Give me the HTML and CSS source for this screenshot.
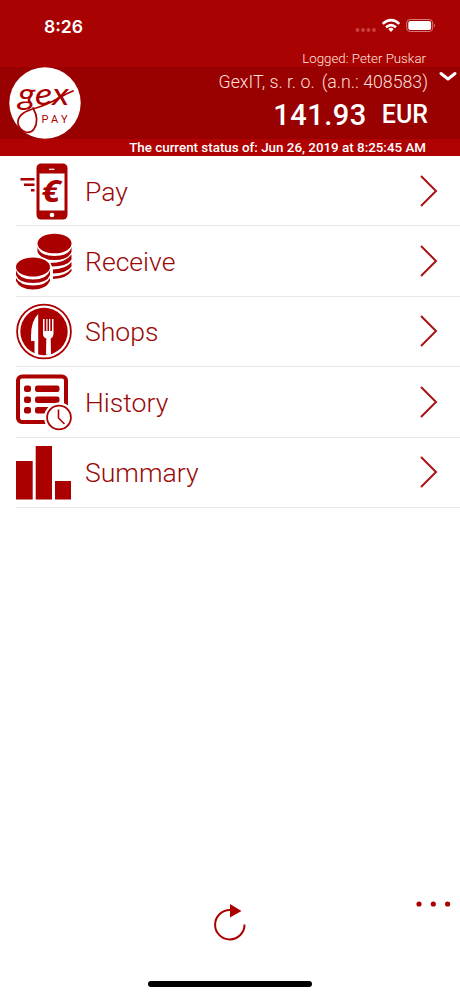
FILE: index.html
```html
<!DOCTYPE html>
<html lang="en">
<head>
<meta charset="utf-8">
<meta name="viewport" content="width=device-width">
<title>gex PAY</title>
<link rel="stylesheet" href="styles.css">
</head>
<body>
<div class="app">
<header class="header">
  <div class="statusbar">
    <span class="time">8:26</span>
    <svg class="signals" width="82" height="18" viewBox="0 0 82 18">
      <g fill="#c94040"><circle cx="3.500" cy="13" r="1.900"/><circle cx="9" cy="13" r="1.900"/><circle cx="14.500" cy="13" r="1.900"/><circle cx="20" cy="13" r="1.900"/></g>
      <g fill="none" stroke="#fff" stroke-width="2.500"><path d="M28.700 6.900Q37 -.700 45.300 6.900"/><path d="M32 10.300Q37 5.900 42 10.300"/></g>
      <path d="M34.300 12Q37 9.700 39.700 12L37 14.900Z" fill="#fff"/>
      <rect x="52.700" y="2.500" width="26" height="12" rx="3.500" fill="none" stroke="#d77a7a"/>
      <rect x="54.300" y="4" width="22.800" height="9" rx="2" fill="#fff"/>
      <path d="M80 6.500Q82 8.500 80 10.500Z" fill="#d77a7a"/>
    </svg>
  </div>
  <div class="logged"><span>Logged: Peter Puskar</span></div>
  <div class="account">
    <svg class="logo" width="72" height="72" viewBox="0 0 72 72">
      <circle cx="36" cy="36" r="35.700" fill="#fff"/>
      <text class="script" x="9" y="38" textLength="51" lengthAdjust="spacingAndGlyphs">gex</text>
      <path class="flourish" d="M24 41C28 48 29 56 25 62C20 69 11 64 9 57C8 48 16 44 27 41C43 37 51 29 64 24"/>
      <text class="pay" x="32.500" y="55.500" textLength="26">PAY</text>
    </svg>
    <div class="details">
      <div class="company"><span>GexIT, s. r. o.</span><span>(a.n.: 408583)</span></div>
      <div class="balance"><span class="amount">141.93</span><span class="currency">EUR</span></div>
    </div>
    <svg class="expand" width="18" height="14" viewBox="0 0 18 14"><path d="M2 3.500L9 9L16 3.500" fill="none" stroke="#fff" stroke-width="3" stroke-linejoin="round" stroke-linecap="round"/></svg>
  </div>
  <div class="updated"><span>The current status of: Jun 26, 2019 at 8:25:45 AM</span></div>
</header>
<main class="menu">
  <div class="row">
    <svg class="icon" width="56" height="58" viewBox="0 0 56 58">
      <rect x="20.500" y="1.500" width="31" height="56" rx="4.500"/>
      <path class="paper" d="M23.500 11.500H48.500V48.500H23.500Z"/>
      <path d="M33 7.300H38.500" stroke="#fff" stroke-width="1.200"/><circle class="paper" cx="36" cy="53" r="2.300"/>
      <path d="M4.500 17.300H18.500M8 22.800H18.500M15 28.300H18.500" stroke="#a00" stroke-width="2.500"/>
      <text class="euro" x="25.500" y="40" textLength="19" lengthAdjust="spacingAndGlyphs">€</text>
    </svg>
    <span class="label">Pay</span>
    <svg class="chevron" width="20" height="34" viewBox="0 0 20 34"><path d="M2 2L17 17L2 32"/></svg>
  </div>
  <div class="row">
    <svg class="icon" width="56" height="58" viewBox="0 0 56 58">
      <ellipse cx="38.500" cy="11.500" rx="17" ry="9.800"/>
      <path d="M21.500 15Q24 24 38.500 24Q53 24 55.500 15V20Q52 28 38.500 28Q25 28 21.500 20Z"/>
      <path d="M32 31Q49 31.500 55.500 22.500V27.500Q51 34.500 36 34.500Q35 32.500 32 31ZM37 37.500Q50 37 55.500 30V34.500Q51 41 37 41.500ZM37 44.500Q50 44 55.500 36.500V39Q51 46.500 37 47Z"/>
      <ellipse cx="17" cy="35" rx="18.500" ry="11.500" class="paper"/>
      <ellipse cx="17" cy="35" rx="17" ry="9.600"/>
      <path d="M0 38.500Q3 47.500 17 47.500Q31 47.500 34 38.500V43Q31 51 17 51Q3 51 0 43ZM0 46Q4 53.500 17 53.500Q30 53.500 34 46V49Q30 57.500 17 57.500Q4 57.500 0 49Z"/>
    </svg>
    <span class="label">Receive</span>
    <svg class="chevron" width="20" height="34" viewBox="0 0 20 34"><path d="M2 2L17 17L2 32"/></svg>
  </div>
  <div class="row">
    <svg class="icon" width="56" height="58" viewBox="0 0 56 58">
      <circle cx="28" cy="29.500" r="26.900" fill="none" stroke="#a00" stroke-width="1.800"/>
      <circle cx="28" cy="29.500" r="23.700"/>
      <path class="paper" d="M22.200 12Q15 19 15 34V39H18.500V52L22.200 53.200ZM27 17H28.500V29H30.300V17H31.500V29H33V17H34.300V29H36V17H37.500V32Q37.500 35 34.700 36.500L35 52Q32.500 53.700 30 52.500L30.300 36.500Q27 35 27 32Z"/>
    </svg>
    <span class="label">Shops</span>
    <svg class="chevron" width="20" height="34" viewBox="0 0 20 34"><path d="M2 2L17 17L2 32"/></svg>
  </div>
  <div class="row">
    <svg class="icon" width="56" height="58" viewBox="0 0 56 58">
      <rect x="2" y="3.500" width="48" height="45.500" rx="4" fill="none" stroke="#a00" stroke-width="4"/>
      <rect x="8" y="12.500" width="7" height="6.500" rx="2.300"/><rect x="19" y="12.500" width="24.500" height="6.500" rx="2.300"/>
      <rect x="8" y="23.500" width="7" height="6.500" rx="2.300"/><rect x="19" y="23.500" width="24.500" height="6.500" rx="2.300"/>
      <rect x="8" y="34" width="7" height="6.500" rx="2.300"/><rect x="19" y="34" width="18" height="6.500" rx="2.300"/>
      <circle cx="43" cy="44.500" r="15" class="paper"/>
      <circle cx="43" cy="44.500" r="11.900" fill="none" stroke="#a00" stroke-width="1.800"/>
      <path d="M42.500 36.500V45L48.500 51" fill="none" stroke="#a00" stroke-width="1.600"/>
    </svg>
    <span class="label">History</span>
    <svg class="chevron" width="20" height="34" viewBox="0 0 20 34"><path d="M2 2L17 17L2 32"/></svg>
  </div>
  <div class="row">
    <svg class="icon" width="56" height="58" viewBox="0 0 56 58"><path d="M0 18H16.700V56.500H0ZM19.700 3H36V56.500H19.700ZM39 38H55V56.500H39Z"/></svg>
    <span class="label">Summary</span>
    <svg class="chevron" width="20" height="34" viewBox="0 0 20 34"><path d="M2 2L17 17L2 32"/></svg>
  </div>
</main>
<footer class="footer">
  <div class="toolbar">
    <svg class="refresh" width="34" height="40" viewBox="0 0 34 40"><path d="M17 7A14.700 14.700 0 1 0 31.500 21.500" fill="none" stroke="#a00" stroke-width="2"/><path d="M17 1L28.500 8L17 14.500Z" fill="#a00"/></svg>
    <svg class="more" width="36" height="8" viewBox="0 0 36 8"><g fill="#a00"><circle cx="4" cy="4" r="2.600"/><circle cx="18.300" cy="4" r="2.600"/><circle cx="32.600" cy="4" r="2.600"/></g></svg>
  </div>
  <div class="home"></div>
</footer>
</div>
</body>
</html>
```
FILE: styles.css
```css
* { box-sizing: border-box; }
body { margin: 0; background: #fff; font-family: Roboto, sans-serif; }
.app { width: 460px; height: 996px; display: flex; flex-direction: column; overflow: hidden; }
.header { height: 156px; background: #a90202; color: #fff; }
.statusbar { height: 50px; padding: 2px 24px 0 44px; display: flex; align-items: center; justify-content: space-between; }
.time { font: 600 17.6px Inter, sans-serif; }
.logged { height: 17px; padding-right: 34px; display: flex; align-items: center; justify-content: flex-end; font-size: 13.3px; font-weight: 300; color: #ffe5df; }
.account { height: 72px; padding-left: 9px; background: #990101; display: flex; }
.logo { flex: none; }
.script { font: italic 31px Lato, sans-serif; fill: #a00; }
.flourish { fill: none; stroke: #a00; stroke-width: 1.7; stroke-linecap: round; }
.pay { font: 400 11px Roboto, sans-serif; fill: #a00; }
.details { flex: 1; }
.company { height: 29px; display: flex; align-items: center; justify-content: flex-end; gap: 7px; font-size: 17.75px; font-weight: 300; color: #ffdfd8; }
.balance { height: 38px; display: flex; align-items: center; justify-content: flex-end; gap: 15px; font-weight: 500; line-height: 38px; }
.amount { font-size: 29px; letter-spacing: .5px; }
.currency { font-size: 25px; }
.expand { margin: 3px 3px 0 11px; flex: none; }
.updated { height: 17px; padding-right: 34px; background: #b00202; display: flex; align-items: center; justify-content: flex-end; font-size: 13.38px; font-weight: 500; }
.row { height: 70.4px; margin-left: 16px; padding-right: 21px; border-bottom: 1px solid #e7e7e7; display: flex; align-items: center; }
.icon { flex: none; fill: #a00; }
.paper { fill: #fff; }
.euro { font: italic bold 31px "Open Sans", sans-serif; fill: #a00; }
.label { flex: 1; padding: 1px 0 0 13px; font-size: 26.6px; font-weight: 300; color: #9a0808; }
.chevron { flex: none; fill: none; stroke: #a91414; stroke-width: 2; }
.footer { margin-top: auto; height: 96px; }
.toolbar { height: 80px; padding: 0 9px 0 213px; display: flex; justify-content: space-between; }
.refresh { margin-top: 3px; }
.home { width: 164px; height: 6px; margin: 1px auto 0; border-radius: 3px; background: #000; }
```
